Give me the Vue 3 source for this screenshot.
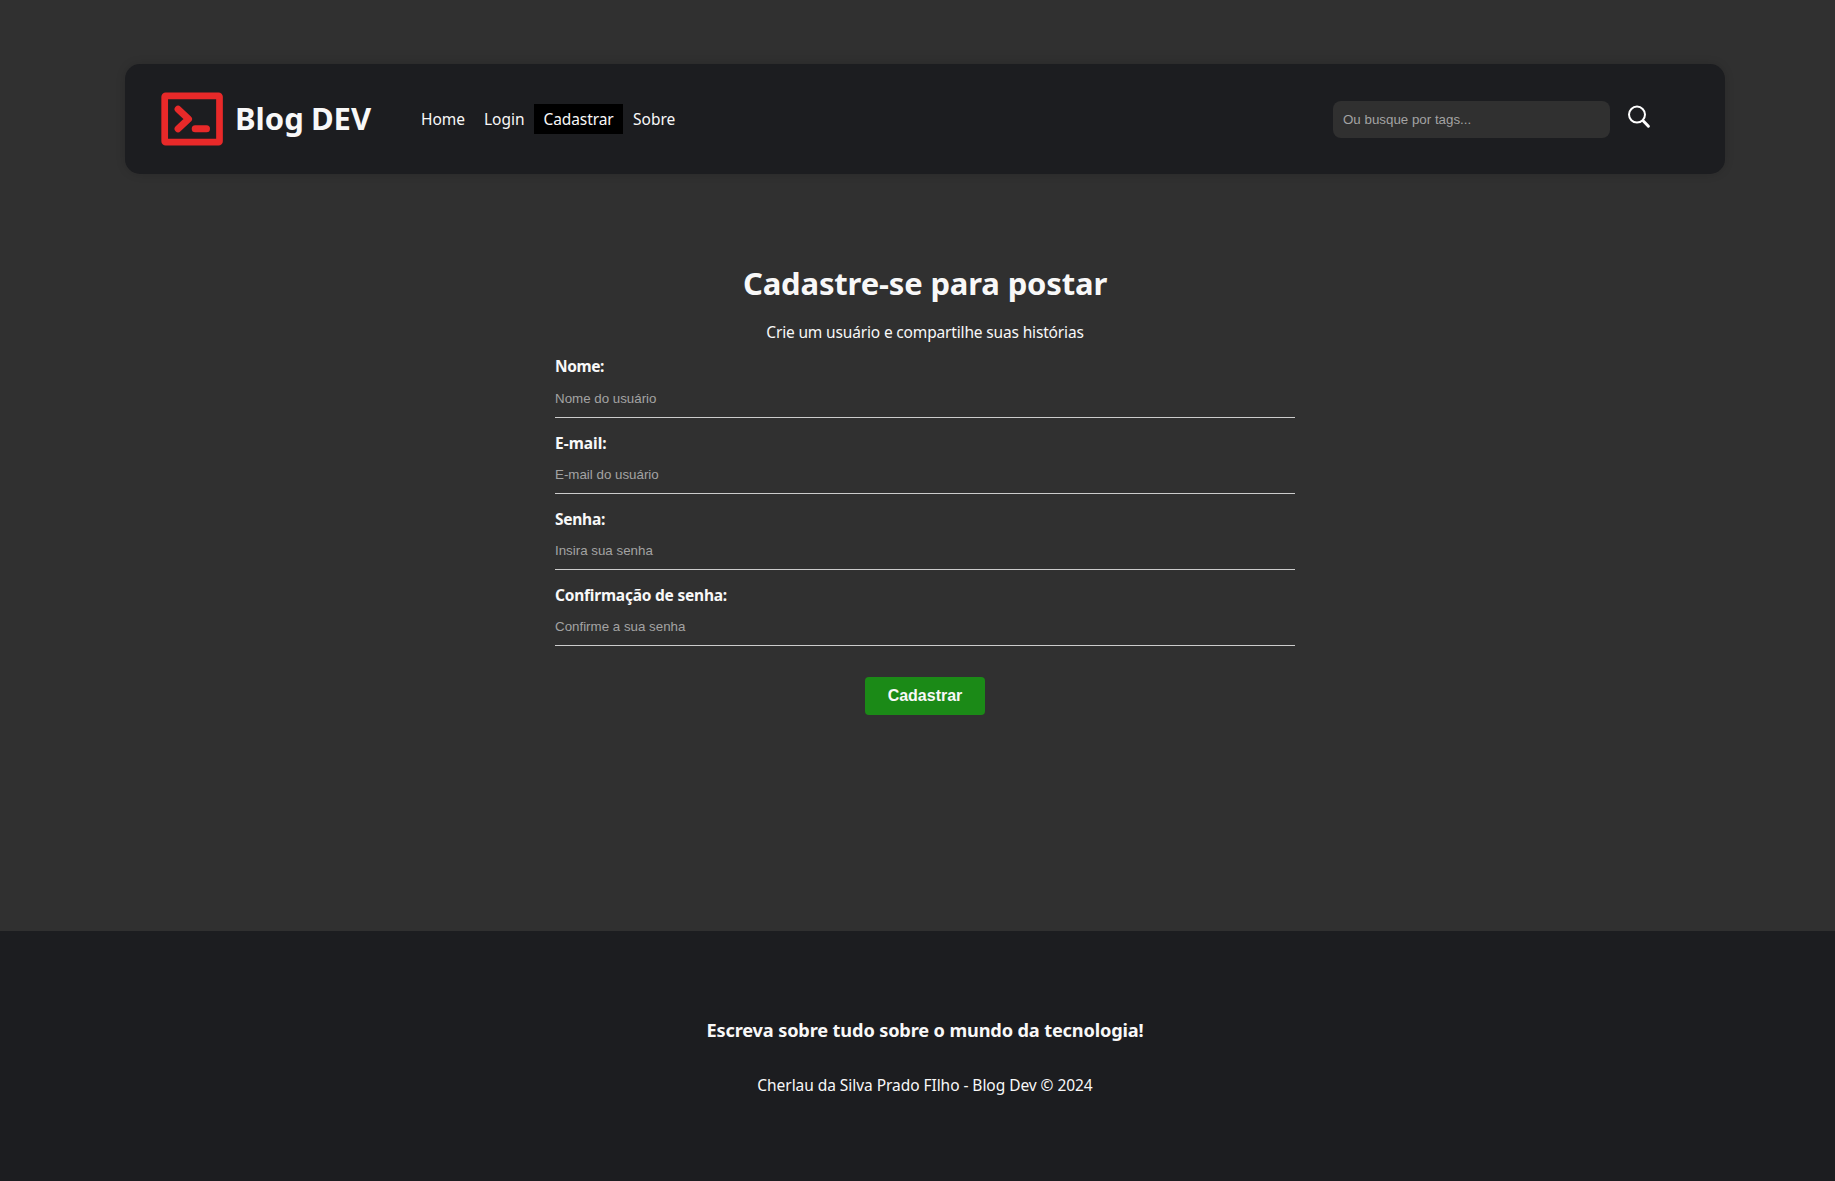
<script setup>
const links = [
  { label: 'Home', cls: 'home' },
  { label: 'Login', cls: 'login' },
  { label: 'Cadastrar', cls: 'register active' },
  { label: 'Sobre', cls: 'about' },
]
const fields = [
  { label: 'Nome:', cls: 'name', type: 'text', placeholder: 'Nome do usuário' },
  { label: 'E-mail:', cls: 'email', type: 'email', placeholder: 'E-mail do usuário' },
  { label: 'Senha:', cls: 'pass', type: 'password', placeholder: 'Insira sua senha' },
  { label: 'Confirmação de senha:', cls: 'confirm', type: 'password', placeholder: 'Confirme a sua senha' },
]
</script>

<template>
  <div class="page">
    <header class="navbar">
      <a class="brand">
        <svg class="logo" viewBox="0 0 62 54" fill="none" stroke="#e82929">
          <rect x="3.7" y="3.8" width="54.8" height="46.4" rx="1" stroke-width="6.7" />
          <path d="M17.1 17.2L27.5 27L17.1 36.8" stroke-width="7" stroke-linecap="round" stroke-linejoin="round" />
          <path d="M34.2 36.8H45.5" stroke-width="7" stroke-linecap="round" />
        </svg>
        <span class="brand-name">Blog DEV</span>
      </a>
      <nav class="links">
        <a v-for="l in links" :key="l.label" :class="l.cls">{{ l.label }}</a>
      </nav>
      <form class="search" @submit.prevent>
        <input type="text" placeholder="Ou busque por tags..." />
        <button type="submit" aria-label="Buscar">
          <svg viewBox="0 0 24 24" fill="none" stroke="#fff">
            <circle cx="10" cy="9.6" r="8" stroke-width="2" />
            <path d="M15.6 15.3L16.4 16.1" stroke-width="2" />
            <path d="M16.6 16.3L21.4 21.2" stroke-width="3" stroke-linecap="round" />
          </svg>
        </button>
      </form>
    </header>

    <main>
      <h1>Cadastre-se para postar</h1>
      <p class="lead">Crie um usuário e compartilhe suas histórias</p>
      <form class="register-form" @submit.prevent>
        <label v-for="f in fields" :key="f.label">
          <span :class="f.cls">{{ f.label }}</span>
          <input :type="f.type" :placeholder="f.placeholder" />
        </label>
        <button class="submit">Cadastrar</button>
      </form>
    </main>

    <footer>
      <h3>Escreva sobre tudo sobre o mundo da tecnologia!</h3>
      <p>Cherlau da Silva Prado FIlho - Blog Dev © 2024</p>
    </footer>
  </div>
</template>

<style>
body {
  background: #303030;
}
</style>

<style scoped>
* {
  box-sizing: border-box;
  margin: 0;
}
.page {
  height: 1181px;
  display: flex;
  flex-direction: column;
  background: #303030;
  color: #f8f8f8;
  font: 15.5px/30px "Noto Sans", "Open Sans", sans-serif;
  overflow: hidden;
  white-space: nowrap;
}
.navbar {
  width: 1600px;
  height: 110px;
  margin: 64px 0 0 125px;
  padding: 0 73px 0 36px;
  display: flex;
  align-items: center;
  background: #1c1d20;
  border-radius: 15px;
  box-shadow: 0 0 10px rgba(0, 0, 0, 0.15);
}
.brand {
  display: flex;
  align-items: center;
  width: 250px;
}
.logo {
  width: 62px;
  height: 54px;
  margin-right: 12px;
}
.brand-name {
  font-size: 31px;
  font-weight: 700;
  line-height: 44px;
  word-spacing: -1px;
  padding-bottom: 2px;
}
.links {
  display: flex;
}
.links a {
  height: 30px;
  padding-left: 10px;
}
.home { width: 63px; }
.login { width: 60px; }
.register { width: 89px; letter-spacing: -0.1px; }
.about { width: 62px; }
.links .register { padding-left: 9.5px; }
.active { background: #000; }
.search {
  display: flex;
  margin-left: auto;
}
input {
  font: 13.333px "Liberation Sans", Arial, sans-serif;
  color: #f8f8f8;
  border: 0;
  outline: 0;
}
input::placeholder {
  color: #a3a3a3;
  opacity: 1;
}
.search input {
  width: 277px;
  height: 37px;
  padding: 1px 10px 0;
  background: #303030;
  border-radius: 8px;
}
.search button {
  display: flex;
  align-items: flex-start;
  width: 42px;
  height: 37px;
  padding: 4px 0 0 17px;
  border: 0;
  background: none;
}
.search svg {
  flex: none;
  width: 24px;
  height: 24px;
}
main {
  flex: 1;
  width: 740px;
  margin: 87px 0 0 555px;
  text-align: center;
}
h1 {
  font-size: 31px;
  line-height: 44px;
  letter-spacing: -0.16px;
}
.lead {
  margin-top: 12px;
  letter-spacing: -0.16px;
}
.register-form {
  display: flex;
  flex-direction: column;
  align-items: center;
  margin-top: 4px;
}
label {
  width: 740px;
  height: 76px;
  display: flex;
  flex-direction: column;
  align-items: flex-start;
  font-weight: 700;
}
label:first-child {
  height: 77px;
}
.name { letter-spacing: -0.4px; }
.pass { letter-spacing: -0.25px; }
.confirm { letter-spacing: -0.22px; }
label input {
  width: 100%;
  height: 36px;
  padding: 0 0 3px;
  background: none;
  border-bottom: 1px solid #ccc;
}
label:first-child input {
  height: 37px;
  padding-bottom: 1px;
}
.submit {
  width: 120px;
  height: 38px;
  margin-top: 21px;
  padding: 0;
  border: 0;
  border-radius: 4px;
  background: #1b8a17;
  color: #f8f8f8;
  font: 700 16px "Liberation Sans", Arial, sans-serif;
}
footer {
  height: 250px;
  padding: 84px 0 0 15px;
  background: #1c1d20;
  text-align: center;
}
footer h3 {
  font-size: 18.2px;
  letter-spacing: -0.15px;
}
footer p {
  margin-top: 25px;
  letter-spacing: -0.05px;
}
</style>
